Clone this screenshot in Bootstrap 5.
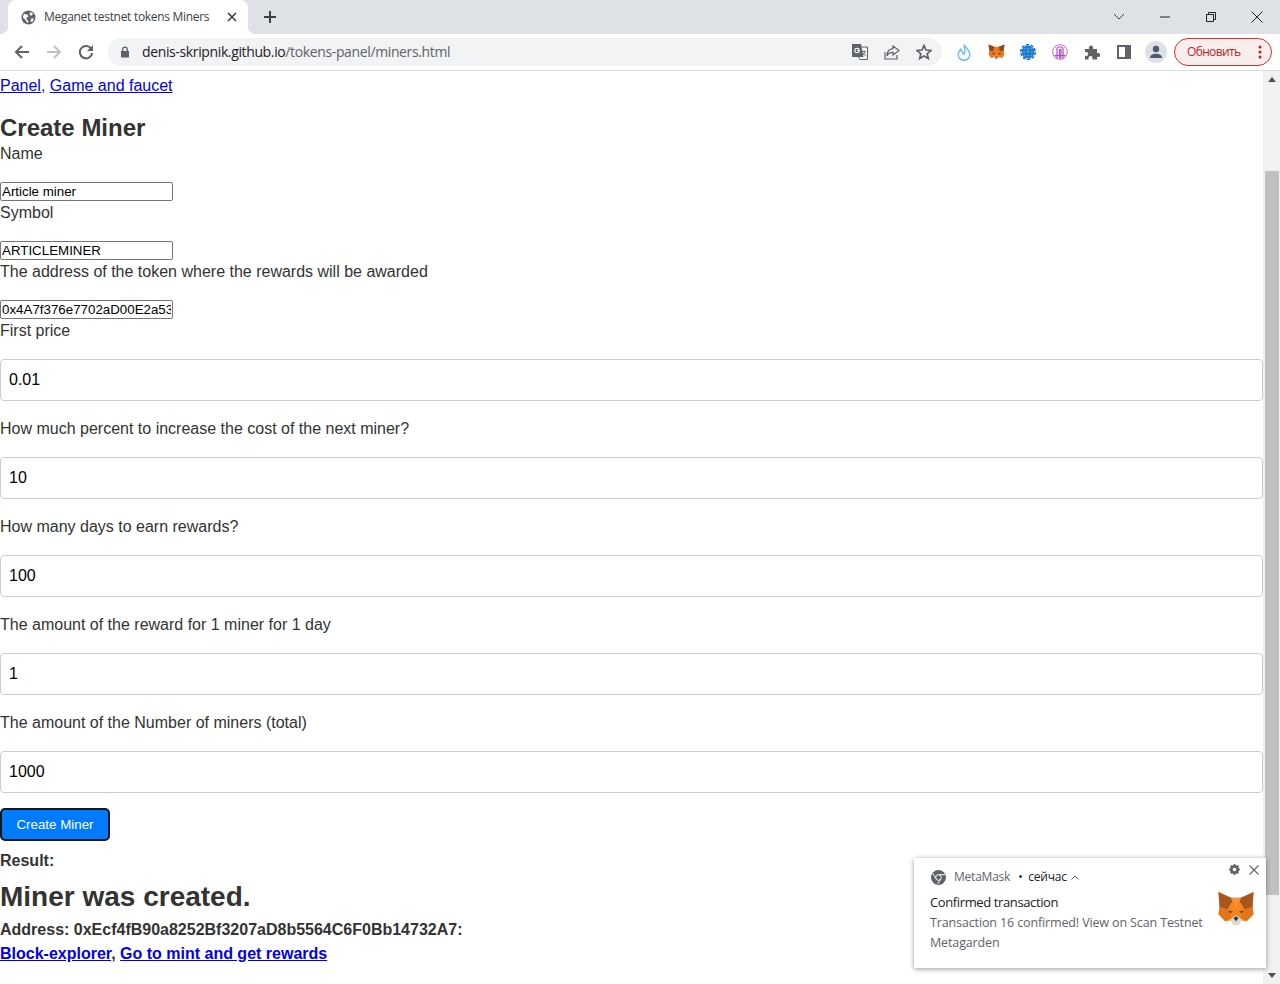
<!DOCTYPE html>
<html lang="en">
<head>
<meta charset="utf-8">
<title>Meganet testnet tokens Miners</title>
<link href="https://cdn.jsdelivr.net/npm/bootstrap@5.3.0/dist/css/bootstrap.min.css" rel="stylesheet">
<style>
html,body{height:984px;overflow:hidden}
body{font-family:"Liberation Sans",Arial,sans-serif;font-size:16px;line-height:24px;color:#333;background:#fff}
.ui-font{font-family:"Open Sans","Noto Sans",sans-serif}
.tabstrip{height:34px;background:#dee1e6;flex:none}
.tab-shape{width:240px;height:34px;margin-left:8px;background:#fff;border-radius:8px 8px 0 0;position:relative;padding:0 11px 0 13px}
.tab-shape::before,.tab-shape::after{content:"";position:absolute;bottom:0;width:8px;height:8px;background:radial-gradient(circle at 0 0,transparent 8px,#fff 8.5px)}
.tab-shape::before{left:-8px}
.tab-shape::after{right:-8px;background:radial-gradient(circle at 100% 0,transparent 8px,#fff 8.5px)}
.tab-title{font-size:12px;color:#3c4043;margin-left:8px;white-space:nowrap;letter-spacing:-.3px}
.new-tab{margin:7px 0 0 12px}
.win-ctrl{width:46px;height:34px}
.toolbar{height:37px;background:#fff;border-bottom:1px solid #dadce0;flex:none;padding:4px 8px 4px 6px}
.tool-btn{width:32px;height:28px;flex:none}
.omni{width:834px;height:28px;background:#f1f3f4;border-radius:14px;margin-left:6px;padding:0 2px 0 12px;flex:none}
.omni-url{font-size:14px;color:#5f6368;margin-left:12px;letter-spacing:-.37px;white-space:nowrap}
.omni-url b{font-weight:400;color:#202124}
.ext-row{margin-left:6px}
.avatar{width:22px;height:22px;border-radius:50%;background:#dee1e6}
.update-pill{width:98px;height:28px;margin-left:2px;border:1px solid #d93025;border-radius:14px;background:#f9eeee;color:#b3261e;font-size:12px;padding:0 9px 0 12px;letter-spacing:-.65px;flex:none}
.page-pane{height:913px;overflow:hidden}
.page-content{width:1263px;flex:none}
.scroll-track{width:17px;background:#f1f1f1;flex:none;padding:100px 1px 0 2px}
.scroll-thumb{height:724px;background:#c1c1c1}
.arrow-up,.arrow-down{position:absolute;right:4px;width:0;height:0;border-left:4.5px solid transparent;border-right:4.5px solid transparent}
.arrow-up{top:6px;border-bottom:5px solid #505050}
.arrow-down{bottom:6px;border-top:5px solid #505050}
.plain-link{color:#00e;text-decoration:underline}
.top-links{padding-top:3px}
.title-h{font-size:24px;font-weight:700;line-height:24px;margin:18px 0 2px;color:#333}
.lbl{display:block;margin:0 0 16px;height:24px;line-height:24px}
.raw-input{display:block;width:173px;height:19px;border:1px solid #767676;border-radius:2px;padding:0 1px;font:13.33px/15px "Liberation Sans",Arial,sans-serif;color:#000;margin:0;background:#fff;outline:0}
.wide-input.form-control{height:42px;border:1px solid #ccc;border-radius:4px;padding:0 8px;font-size:16px;color:#000;margin:0 0 16px;box-shadow:none;background:#fff;font-family:"Liberation Sans",Arial,sans-serif}
.submit-btn.btn{width:110px;height:33px;background:#007bff;border:2px solid #101820;border-radius:5px;color:#fff;font-size:13.33px;line-height:18px;padding:0;margin-top:-1px;display:block}
.res-line{font-weight:700;margin:8px 0 0}
.res-big{font-size:28px;font-weight:700;line-height:34px;margin:7px 0 0;color:#333}
.res-addr{font-weight:700;margin:4px 0 0}
.toast-note{position:absolute;left:914px;top:787px;width:352px;height:110px;background:#fff;box-shadow:0 1px 5px rgba(0,0,0,.4);z-index:3}
.toast-head{position:absolute;left:17px;top:7px;font-size:12px;color:#202124;white-space:nowrap;letter-spacing:-.22px}
.toast-app{color:#5f6368;margin-left:8px;margin-right:8px}
.toast-caret{margin-left:4px}
.toast-body-txt{position:absolute;left:16px;top:35px;width:285px}
.toast-title{font-size:13px;line-height:19px;color:#202124;letter-spacing:-.38px}
.toast-sub{font-size:12.5px;line-height:20px;color:#5f6368;letter-spacing:-.13px;margin-top:1px}
.toast-gear{position:absolute;left:315px;top:6px}
.toast-x{position:absolute;left:334px;top:6px}
.toast-fox{position:absolute;left:304px;top:33px}
</style>
</head>
<body class="d-flex flex-column">
<div class="tabstrip d-flex ui-font">
  <div class="tab-shape d-flex align-items-center">
    <svg width="15" height="15" viewBox="0 0 16 16"><circle cx="8" cy="8" r="7.5" fill="#5f6368"/><path d="M3 4l4 1 1 2-2 1v2l2 2-1 2-2-3-3-3zM10 2l3 2-2 2-2-1zM11 9l3 0-2 4-2-1z" fill="#fff"/></svg>
    <span class="tab-title">Meganet testnet tokens Miners</span>
    <svg class="ms-auto" width="10" height="10" viewBox="0 0 10 10"><path d="M1 1l8 8M9 1l-8 8" stroke="#3c4043" stroke-width="1.600"/></svg>
  </div>
  <svg class="new-tab" width="20" height="20" viewBox="0 0 20 20"><path d="M10 4v12M4 10h12" stroke="#3c4043" stroke-width="2"/></svg>
  <div class="ms-auto d-flex">
    <div class="win-ctrl d-flex align-items-center justify-content-center"><svg width="12" height="8" viewBox="0 0 12 8"><path d="M1 1l5 5 5-5" fill="none" stroke="#3c4043"/></svg></div>
    <div class="win-ctrl d-flex align-items-center justify-content-center"><svg width="10" height="10" viewBox="0 0 10 10"><path d="M0 5h10" stroke="#202124"/></svg></div>
    <div class="win-ctrl d-flex align-items-center justify-content-center"><svg width="10" height="10" viewBox="0 0 10 10"><path d="M.5 2.500h7v7h-7zM2.500 2.500v-2h7v7h-2" fill="none" stroke="#202124"/></svg></div>
    <div class="win-ctrl d-flex align-items-center justify-content-center"><svg width="12" height="12" viewBox="0 0 12 12"><path d="M.5.5l11 11M11.500.5l-11 11" stroke="#202124"/></svg></div>
  </div>
</div>
<div class="toolbar d-flex align-items-center ui-font">
  <div class="tool-btn d-flex align-items-center justify-content-center"><svg width="16" height="16" viewBox="0 0 16 16"><path d="M15 8H2M8 2L2 8l6 6" fill="none" stroke="#5f6368" stroke-width="2"/></svg></div>
  <div class="tool-btn d-flex align-items-center justify-content-center"><svg width="16" height="16" viewBox="0 0 16 16"><path d="M1 8h13M8 2l6 6-6 6" fill="none" stroke="#bdc1c6" stroke-width="2"/></svg></div>
  <div class="tool-btn d-flex align-items-center justify-content-center"><svg width="16" height="16" viewBox="0 0 16 16"><path d="M13.500 5.200A6.200 6.200 0 1 0 14.200 9" fill="none" stroke="#5f6368" stroke-width="2"/><path d="M15 1v6H9z" fill="#5f6368"/></svg></div>
  <div class="omni d-flex align-items-center">
    <svg width="10" height="12" viewBox="0 0 10 12"><path d="M1 5h8v6.500H1z" fill="#5f6368"/><path d="M2.700 5V3.400a2.300 2.300 0 0 1 4.600 0V5" fill="none" stroke="#5f6368" stroke-width="1.300"/></svg>
    <span class="omni-url"><b>denis-skripnik.github.io</b>/tokens-panel/miners.html</span>
    <div class="ms-auto d-flex align-items-center">
      <div class="tool-btn d-flex align-items-center justify-content-center"><svg width="16" height="16" viewBox="0 0 16 16"><path d="M7 3h8.500v12.500H8L6.500 13" fill="#f1f3f4" stroke="#5f6368"/><path d="M0 0h9l2.500 13H0z" fill="#5f6368"/><circle cx="5" cy="6.500" r="2.200" fill="none" stroke="#fff" stroke-width="1.100"/><path d="M5 6.500h2.300" stroke="#fff" stroke-width="1"/><path d="M10 7.500h4M12 6.500v1M13 7.500c-.5 2-2 3.500-3 4M10.800 8.500c.5 1.500 2 2.700 3.200 3" fill="none" stroke="#5f6368" stroke-width=".8"/></svg></div>
      <div class="tool-btn d-flex align-items-center justify-content-center"><svg width="16" height="16" viewBox="0 0 16 16"><path d="M1 8v7h12v-4" fill="none" stroke="#5f6368" stroke-width="1.200"/><path d="M9 2l6 4.500L9 11V8.300C6 8.300 4 9.300 3 12c0-4 2.200-7 6-7.300z" fill="none" stroke="#5f6368" stroke-width="1.200"/></svg></div>
      <div class="tool-btn d-flex align-items-center justify-content-center"><svg width="16" height="16" viewBox="0 0 16 16"><path d="M8 1.500l2 4.500 4.900.5-3.700 3.200 1.100 4.800L8 12l-4.300 2.500 1.100-4.800L1.100 6.500 6 6z" fill="none" stroke="#5f6368" stroke-width="1.700"/></svg></div>
    </div>
  </div>
  <div class="ext-row d-flex align-items-center">
    <div class="tool-btn d-flex align-items-center justify-content-center"><svg width="14" height="17" viewBox="0 0 14 17"><path d="M7 1C9 3.500 12.800 6.500 12.800 10.500A5.800 5.800 0 0 1 1.200 10.500C1.200 8.500 2.300 7 3.800 5 4.500 7.500 5.800 8.500 6.800 10.500 8.200 8 8 4 7 1z" fill="none" stroke="#74bdf2" stroke-width="1.500" stroke-linejoin="round"/></svg></div>
    <div class="tool-btn d-flex align-items-center justify-content-center"><svg width="17" height="16" viewBox="0 0 36 34"><polygon points="1,1 13,6 23,6 35,1 33,15 35,22 30,30 22,28 14,28 6,30 1,22 3,15" fill="#f0781c"/><polygon points="1,1 13,6 11,15 3,15" fill="#8a4a1c"/><polygon points="35,1 23,6 25,15 33,15" fill="#8a4a1c"/><polygon points="7,18 15,20 12,23" fill="#763d16"/><polygon points="29,18 21,20 24,23" fill="#763d16"/><polygon points="13,28 18,24 23,28 21,33 15,33" fill="#d7c1b3"/><polygon points="15.500,28 18,25.500 20.500,28 18,30" fill="#233447"/></svg></div>
    <div class="tool-btn d-flex align-items-center justify-content-center"><svg width="16" height="16" viewBox="0 0 16 16"><circle cx="8" cy="8" r="6.500" fill="#0a6fd0"/><circle cx="8" cy="8" r="7.300" fill="none" stroke="#0a6fd0" stroke-width="1.400" stroke-dasharray="3 1.600"/><path d="M2 8h12M8 2v12M3.500 4.700h9M3.500 11.300h9M5.500 3c-2 3-2 7 0 10M10.500 3c2 3 2 7 0 10" fill="none" stroke="#5ba4e6" stroke-width=".7"/><path d="M7 7h2.800M8.400 5.800v2.400" stroke="#35c26a"/></svg></div>
    <div class="tool-btn d-flex align-items-center justify-content-center"><svg width="16" height="16" viewBox="0 0 16 16"><circle cx="8" cy="8" r="7.300" fill="#fff" stroke="#d65cd0"/><path d="M5 14.500V5a2 2 0 0 1 2-2h2a2 2 0 0 1 2 2v9.500M7.500 14.500V5.500h1.500v9M2.500 11.500h11" fill="none" stroke="#b045d6" stroke-width="1.200"/></svg></div>
    <div class="tool-btn d-flex align-items-center justify-content-center"><svg width="16" height="16" viewBox="0 0 16 16"><path d="M1 5h4V3.500a2 2 0 0 1 4 0V5h4v4h1.200a2 2 0 0 1 0 4H13v2.500H8.500V14a2 2 0 0 0-4 0v1.500H1V12h1.200a2 2 0 0 0 0-4H1z" fill="#5f6368"/></svg></div>
    <div class="tool-btn d-flex align-items-center justify-content-center"><svg width="14" height="14" viewBox="0 0 14 14"><path d="M0 0h14v14H0z" fill="#5f6368"/><path d="M2 2h6v10H2z" fill="#fff"/></svg></div>
    <div class="tool-btn d-flex align-items-center justify-content-center"><div class="avatar d-flex align-items-center justify-content-center"><svg width="14" height="14" viewBox="0 0 14 14"><circle cx="7" cy="4" r="3.200" fill="#4f5a6b"/><path d="M1 13c0-3 3-4.300 6-4.300s6 1.300 6 4.300z" fill="#4f5a6b"/></svg></div></div>
    <div class="update-pill d-flex align-items-center justify-content-between"><span>Обновить</span><svg width="4" height="14" viewBox="0 0 4 14"><circle cx="2" cy="2" r="1.500" fill="#c5221f"/><circle cx="2" cy="7" r="1.500" fill="#c5221f"/><circle cx="2" cy="12" r="1.500" fill="#c5221f"/></svg></div>
  </div>
</div>
<div class="page-pane d-flex position-relative">
  <main class="page-content">
    <div class="top-links"><a class="plain-link" href="#">Panel</a>, <a class="plain-link" href="#">Game and faucet</a></div>
    <h2 class="title-h">Create Miner</h2>
    <form>
      <label class="lbl">Name</label>
      <input class="raw-input" value="Article miner">
      <label class="lbl">Symbol</label>
      <input class="raw-input" value="ARTICLEMINER">
      <label class="lbl">The address of the token where the rewards will be awarded</label>
      <input class="raw-input" value="0x4A7f376e7702aD00E2a53f0">
      <label class="lbl">First price</label>
      <input class="form-control wide-input" value="0.01">
      <label class="lbl">How much percent to increase the cost of the next miner?</label>
      <input class="form-control wide-input" value="10">
      <label class="lbl">How many days to earn rewards?</label>
      <input class="form-control wide-input" value="100">
      <label class="lbl">The amount of the reward for 1 miner for 1 day</label>
      <input class="form-control wide-input" value="1">
      <label class="lbl">The amount of the Number of miners (total)</label>
      <input class="form-control wide-input" value="1000">
      <button type="button" class="btn submit-btn">Create Miner</button>
    </form>
    <div class="res-line">Result:</div>
    <div class="res-big">Miner was created.</div>
    <div class="res-addr">Address: 0xEcf4fB90a8252Bf3207aD8b5564C6F0Bb14732A7:</div>
    <div class="fw-bold"><a class="plain-link" href="#">Block-explorer</a>, <a class="plain-link" href="#">Go to mint and get rewards</a></div>
  </main>
  <div class="scroll-track position-relative"><span class="arrow-up"></span><div class="scroll-thumb"></div><span class="arrow-down"></span></div>
  <aside class="toast-note ui-font">
    <div class="toast-head d-flex align-items-center">
      <svg width="15" height="15" viewBox="0 0 16 16"><circle cx="8" cy="8" r="8" fill="#5f6368"/><circle cx="8" cy="8" r="3" fill="#5f6368" stroke="#fff" stroke-width="1"/><path d="M8 5h7M5.500 9.500L2 3.500M10.500 9.500L7 15" stroke="#fff"/></svg>
      <span class="toast-app">MetaMask</span><span>•&nbsp; сейчас</span>
      <svg class="toast-caret" width="8" height="5" viewBox="0 0 8 5"><path d="M.5 4.500L4 1l3.500 3.500" fill="none" stroke="#5f6368"/></svg>
    </div>
    <svg class="toast-gear" width="11" height="11" viewBox="0 0 12 12"><circle cx="6" cy="6" r="3.500" fill="none" stroke="#5f6368" stroke-width="3"/><path d="M6 0v12M0 6h12M1.800 1.800l8.400 8.400M10.200 1.800l-8.400 8.400" stroke="#5f6368" stroke-width="1.800" stroke-dasharray="2 8"/></svg>
    <svg class="toast-x" width="12" height="12" viewBox="0 0 12 12"><path d="M1.500 1.500l9 9M10.500 1.500l-9 9" stroke="#5f6368" stroke-width="1.100"/></svg>
    <div class="toast-body-txt">
      <div class="toast-title">Confirmed transaction</div>
      <div class="toast-sub">Transaction 16 confirmed! View on Scan Testnet Metagarden</div>
    </div>
    <svg class="toast-fox" width="36" height="35" viewBox="0 0 36 36"><polygon points="0,1 12,7 24,7 36,1 35,16 36,24 29,31 23,30 13,30 7,31 0,24 1,16" fill="#f6851b"/><polygon points="0,1 13,7 14,11 9,19 1,16" fill="#a8561e"/><polygon points="36,1 23,7 22,11 27,19 35,16" fill="#a8561e"/><polygon points="13,7 23,7 18,18" fill="#f5913a"/><polygon points="1,16 9,19 14,27 7,31 0,24" fill="#e2761b"/><polygon points="35,16 27,19 22,27 29,31 36,24" fill="#e2761b"/><polygon points="10,20 15,21 12,23" fill="#5c3a1e"/><polygon points="26,20 21,21 24,23" fill="#5c3a1e"/><polygon points="12,29 18,25 24,29 21,35 15,35" fill="#e4d5c8"/><polygon points="15.500,28 18,26 20.500,28 18,31" fill="#233447"/></svg>
  </aside>
</div>
</body>
</html>
